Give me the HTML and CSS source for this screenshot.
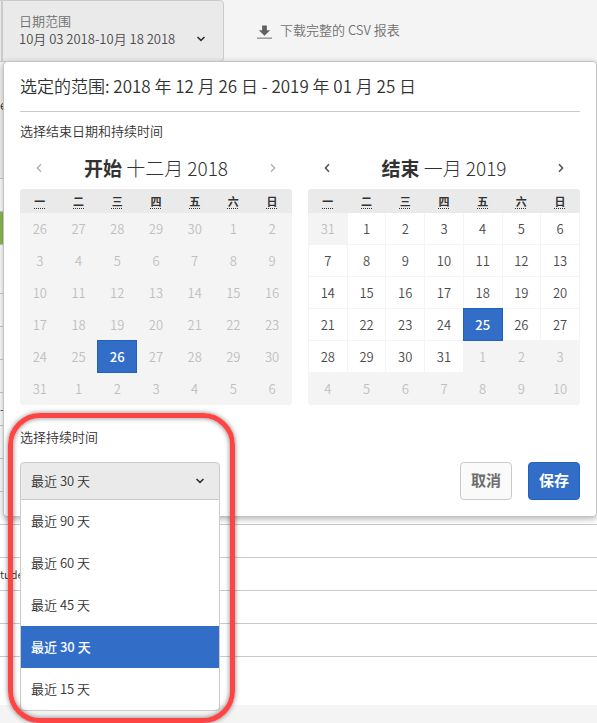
FILE: index.html
```
<!DOCTYPE html>
<html lang="zh-CN">
<head>
<meta charset="utf-8">
<meta name="viewport" content="width=device-width, initial-scale=1">
<title>日期范围</title>
<link rel="stylesheet" href="styles.css">
</head>
<body>
<header class="toolbar">
  <span class="toolbar-prev"></span>
  <button class="range-button" type="button" aria-expanded="true">
    <span class="range-text">
      <span class="range-label">日期范围</span>
      <span class="range-value">10月 03 2018-10月 18 2018</span>
    </span>
    <svg class="chevron" viewBox="0 0 10 6" aria-hidden="true"><path d="M1.500 1 5 4.300 8.500 1"/></svg>
  </button>
  <a class="download" href="#csv">
    <svg class="download-icon" viewBox="0 0 16 15" aria-hidden="true"><path d="M5.500 0h5v5h3.500L8 11 2 5h3.500z"/><path d="M0 13h16v1H0z"/></svg>
    <span>下载完整的 CSV 报表</span>
  </a>
</header>

<main class="stage">
  <div class="report">
    <div class="report-head">et</div>
    <div class="row"></div>
    <div class="row row-green"></div>
    <div class="row row-tall"></div>
    <div class="row"></div>
    <div class="row"></div>
    <div class="row"></div>
    <div class="row">-</div>
    <div class="row"></div>
    <div class="row"></div>
    <div class="row"></div>
    <div class="row"></div>
    <div class="row">tude</div>
    <div class="row"></div>
    <div class="row"></div>
    <div class="row row-last"></div>
  </div>

  <section class="dialog" role="dialog" aria-labelledby="range-title">
    <h1 class="dialog-title" id="range-title">选定的范围: 2018 年 12 月 26 日 - 2019 年 01 月 25 日</h1>
    <p class="hint">选择结束日期和持续时间</p>
    <div class="calendars">
      <section class="calendar">
        <div class="calendar-head">
          <button class="nav" type="button" aria-label="上个月" disabled><svg viewBox="0 0 6 10" aria-hidden="true"><path d="M5 1.200 1.400 5 5 8.800"/></svg></button>
          <h2><b>开始</b> 十二月 2018</h2>
          <button class="nav" type="button" aria-label="下个月" disabled><svg viewBox="0 0 6 10" aria-hidden="true"><path d="M1 1.200 4.600 5 1 8.800"/></svg></button>
        </div>
        <table class="days" data-prev="30" data-lead="5" data-length="31" data-selected="26" data-locked="true"></table>
      </section>
      <section class="calendar">
        <div class="calendar-head">
          <button class="nav" type="button" aria-label="上个月"><svg viewBox="0 0 6 10" aria-hidden="true"><path d="M5 1.200 1.400 5 5 8.800"/></svg></button>
          <h2><b>结束</b> 一月 2019</h2>
          <button class="nav" type="button" aria-label="下个月"><svg viewBox="0 0 6 10" aria-hidden="true"><path d="M1 1.200 4.600 5 1 8.800"/></svg></button>
        </div>
        <table class="days" data-prev="31" data-lead="1" data-length="31" data-selected="25"></table>
      </section>
    </div>
    <div class="footer">
      <div class="duration">
        <label class="duration-label" for="duration">选择持续时间</label>
        <div class="select-wrap">
          <select class="select" id="duration">
            <option>最近 90 天</option>
            <option>最近 60 天</option>
            <option>最近 45 天</option>
            <option selected>最近 30 天</option>
            <option>最近 15 天</option>
          </select>
          <svg class="chevron select-chevron" viewBox="0 0 10 6" aria-hidden="true"><path d="M1.500 1 5 4.300 8.500 1"/></svg>
          <ul class="options" role="listbox" aria-label="选择持续时间">
            <li role="option">最近 90 天</li>
            <li role="option">最近 60 天</li>
            <li role="option">最近 45 天</li>
            <li role="option" class="is-active" aria-selected="true">最近 30 天</li>
            <li role="option">最近 15 天</li>
          </ul>
        </div>
        <div class="callout"></div>
      </div>
      <div class="actions">
        <button class="button" type="button">取消</button>
        <button class="button button-primary" type="button">保存</button>
      </div>
    </div>
  </section>
</main>
<script src="calendar.js"></script>
</body>
</html>
```
FILE: styles.css
```
* { box-sizing: border-box; }

body {
  margin: 0;
  min-height: 100vh;
  overflow: hidden;
  background: #f4f4f4;
  color: #323232;
  font-family: "Noto Sans CJK SC", sans-serif;
  font-size: 13px;
  font-weight: 350;
  line-height: 20px;
}

button, select { font: inherit; color: inherit; }
h1, h2, p, ul { margin: 0; padding: 0; font-weight: inherit; }

.toolbar { display: flex; height: 62px; }

.toolbar-prev {
  width: 2px;
  border: 1px solid #cacaca;
  border-left: 0;
  background: #eaeaea;
}

.range-button {
  display: flex;
  align-items: center;
  justify-content: space-between;
  width: 222px;
  padding: 0 17px 2px 16px;
  border: 1px solid #cacaca;
  border-radius: 0 4px 4px 0;
  background: #eaeaea;
  text-align: left;
}

.range-text { display: flex; flex-direction: column; line-height: 18px; }
.range-label { color: #707070; }
.range-value { color: #4b4b4b; }

.chevron { width: 10px; height: 6px; }
.range-button .chevron { margin-top: 18px; }
.chevron path, .nav path { fill: none; stroke: #323232; stroke-width: 1.6; }

.download {
  display: flex;
  align-items: center;
  gap: 8px;
  margin-left: 33px;
  padding-bottom: 2px;
  color: #707070;
  text-decoration: none;
}
.download-icon { width: 15px; height: 15px; fill: #606060; margin-top: 4px; }

.stage { position: relative; }

.report { background: #fff; }
.report-head { height: 117px; padding-top: 33px; background: #f4f4f4; border-bottom: 1px solid #cacaca; }
.row { height: 33px; padding-top: 6px; border-bottom: 1px solid #cacaca; font-size: 11px; }
.row-green { background: #8abc4a; }
.row-tall { height: 49px; }
.row-last { height: 48px; border-bottom: 0; }

.dialog {
  position: absolute;
  inset: -1px 0 auto 3px;
  padding: 0 16px 16px;
  border: 1px solid #c4c4c4;
  border-radius: 4px;
  background: #fff;
  box-shadow: 0 2px 6px rgba(0, 0, 0, .3);
}

.dialog-title {
  height: 50px;
  border-bottom: 1px solid #cacaca;
  font-size: 17px;
  line-height: 48px;
}

.hint { padding: 8px 0 6px; line-height: 22px; }

.calendars { display: grid; grid-template-columns: 1fr 1fr; gap: 16px; }

.calendar-head {
  display: flex;
  align-items: center;
  justify-content: space-between;
  height: 39px;
  margin-bottom: 2px;
}
.calendar-head h2 { font-size: 19px; font-weight: 300; line-height: 38px; }
.calendar-head b { font-weight: 700; }

.nav { display: flex; justify-content: center; width: 38px; padding: 8px 0; border: 0; background: none; }
.nav svg { width: 6px; height: 10px; }
.nav path { stroke: #505050; stroke-width: 1.5; }
.nav:disabled path { stroke: #b4b4b4; }

.days {
  width: 100%;
  table-layout: fixed;
  border-collapse: collapse;
  border-radius: 4px;
  overflow: hidden;
  background: #f4f4f4;
}
.days th, .days td { height: 32px; padding: 0; border: 1px solid #f4f4f4; background: #fff; text-align: center; }
.days th { height: 23px; border-color: #eaeaea; background: #eaeaea; font-size: 11px; font-weight: 700; line-height: 16px; }
.days abbr { text-decoration: underline dotted 1px; text-underline-offset: 2px; }
.days button { display: block; width: 100%; height: 31px; padding: 0; border: 0; background: none; font-size: 13px; font-weight: 350; line-height: 31px; color: #4b4b4b; }
.days .muted { background: #f4f4f4; }
.days .muted button { color: #c0c0c0; }
.days .selected button {
  position: relative;
  background: #326ec8;
  box-shadow: 0 0 0 1px #2160bc;
  color: #fff;
  font-weight: 500;
}

.footer { display: flex; justify-content: space-between; align-items: flex-end; padding-top: 21px; }

.duration { position: relative; width: 200px; }
.duration-label { display: block; height: 36px; line-height: 22px; }

.select-wrap { position: relative; }
.select {
  display: block;
  width: 100%;
  height: 38px;
  padding: 0 10px;
  appearance: none;
  border: 1px solid #cacaca;
  border-radius: 4px 4px 0 0;
  background: #eaeaea;
}
.select-chevron { position: absolute; top: 16px; right: 15px; pointer-events: none; }

.options {
  position: absolute;
  top: 100%;
  left: 0;
  right: 0;
  border: 1px solid #cacaca;
  border-top: 0;
  border-radius: 0 0 4px 4px;
  background: #fff;
  list-style: none;
}
.options li { height: 42px; padding: 0 10px; line-height: 42px; }
.options .is-active { background: #326ec8; color: #fff; font-weight: 500; }

.callout {
  position: absolute;
  top: -13px;
  left: -12px;
  right: -15px;
  height: 310px;
  border: 5px solid #ff4444;
  border-radius: 32px;
  box-shadow: 0 0 5px rgba(0, 0, 0, .5), inset 0 0 5px rgba(0, 0, 0, .5);
  pointer-events: none;
}

.actions { display: flex; gap: 16px; }
.button {
  width: 52px;
  height: 38px;
  padding: 0 0 2px;
  border: 1px solid #cacaca;
  border-radius: 4px;
  background: #fafafa;
  color: #6e6e6e;
  font-size: 15px;
  font-weight: 700;
}
.button-primary { border-color: #2160bc; background: #326ec8; color: #fff; }
```
FILE: calendar.js
```
// Fills each .days table with six weeks, starting on Monday.
document.querySelectorAll('.days').forEach(function (table) {
  var data = table.dataset;
  var lead = Number(data.lead);
  var prev = Number(data.prev);
  var length = Number(data.length);
  var head = table.createTHead().insertRow();
  ['一', '二', '三', '四', '五', '六', '日'].forEach(function (name) {
    var th = document.createElement('th');
    var abbr = document.createElement('abbr');
    th.scope = 'col';
    abbr.title = '星期' + name;
    abbr.textContent = name;
    th.append(abbr);
    head.append(th);
  });
  var body = table.createTBody();
  for (var week = 0; week < 6; week++) {
    var row = body.insertRow();
    for (var i = 0; i < 7; i++) {
      var day = week * 7 + i - lead + 1;
      var cell = row.insertCell();
      var button = document.createElement('button');
      var outside = day < 1 || day > length;
      button.type = 'button';
      button.textContent = day < 1 ? prev + day : day > length ? day - length : day;
      if (!outside && day === Number(data.selected)) cell.className = 'selected';
      else if (outside || data.locked) {
        cell.className = 'muted';
        button.disabled = true;
      }
      cell.append(button);
    }
  }
});
```
